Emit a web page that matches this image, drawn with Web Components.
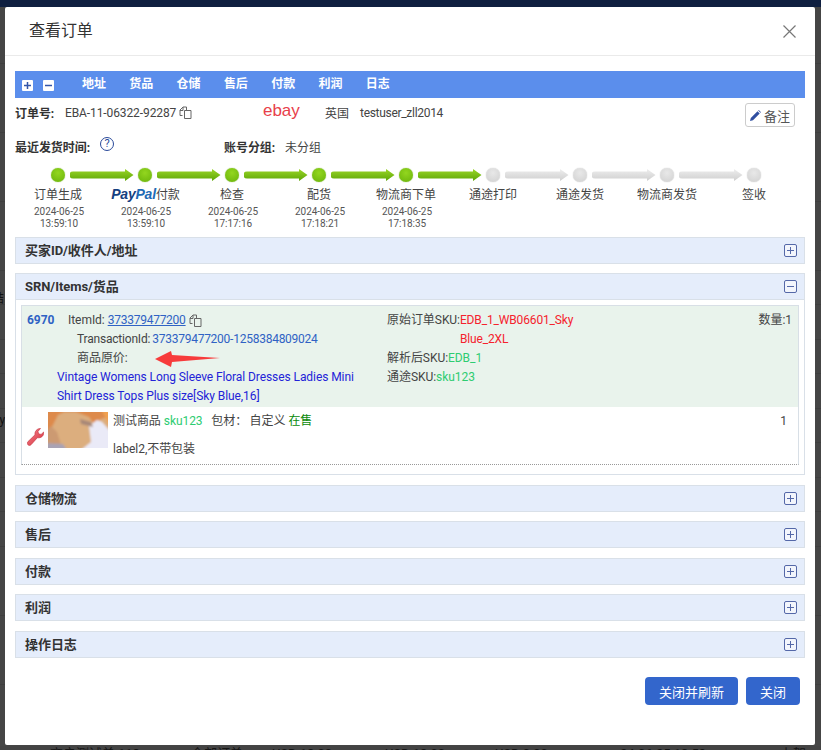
<!DOCTYPE html>
<html>
<head>
<meta charset="utf-8">
<style>
html, body { margin: 0; padding: 0; height: 750px; overflow: hidden; background: #434343; }
body { font: 12px Roboto, "Noto Sans CJK SC", sans-serif; color: #444; position: relative; letter-spacing: -.05px; }
</style>
</head>
<body>
<page-backdrop></page-backdrop>
<order-modal heading="查看订单">
	<order-toolbar></order-toolbar>
	<order-summary></order-summary>
	<order-steps></order-steps>
	<order-section heading="买家ID/收件人/地址"></order-section>
	<order-section heading="SRN/Items/货品" open>
		<order-item></order-item>
	</order-section>
	<order-section heading="仓储物流"></order-section>
	<order-section heading="售后"></order-section>
	<order-section heading="付款"></order-section>
	<order-section heading="利润"></order-section>
	<order-section heading="操作日志"></order-section>
</order-modal>

<script>
(function() {
	const copyIcon = `<svg width="13" height="13" viewBox="0 0 13 13" fill="none" stroke="#666" stroke-width="1"><path d="M5.500 4.500h6.500v8H5.500z"/><path d="M3.500 9.500H1V4l3-3h3.500v3.500"/><path d="M1 4.500h3V1"/></svg>`;

	class PageBackdrop extends HTMLElement {
		constructor() {
			super();
			const root = this.attachShadow({mode: "open"});
			root.innerHTML = `
				<style>
				:host { display: block; height: 750px; }
				.top { height: 7px; background: #0f1f40; }
				.rows { height: 739px; background: repeating-linear-gradient(#454545 0 33.500px, #3e3e3e 33.500px 34.500px) 0 -12px; color: #111; }
				.left { padding-top: 282px; }
				.left div { height: 124px; white-space: nowrap; }
				.cells { display: flex; color: #151515; font-size: 13px; line-height: 16px; padding-left: 50px; }
				.cells span { white-space: nowrap; flex: none; }
				</style>
				<div class="top"></div>
				<div class="rows"><div class="left"><div style="margin-left:-8px">结</div><div style="margin-left:-11px">ary</div></div></div>
				<div class="cells">
					<span style="width:141px">商户测试单 118</span><span style="width:81px">全部订单</span><span style="width:113px">USD 18.00</span><span style="width:110px">USD 18.00</span><span style="width:125px">USD 0.00</span><span style="width:160px">24-06-25 13:59</span><span>上架</span>
				</div>`;
		}
	}

	class OrderModal extends HTMLElement {
		constructor() {
			super();
			const root = this.attachShadow({mode: "open"});
			root.innerHTML = `
				<style>
				:host { display: flex; flex-direction: column; position: absolute; left: 5px; top: 7px; width: 810px; height: 738px; background: #fff; border-radius: 2px; box-sizing: border-box; }
				header { height: 48px; flex: none; border-bottom: 1px solid #eaeaea; display: flex; align-items: center; justify-content: space-between; padding: 0 19px 0 24px; }
				h1 { margin: 0; font-size: 16px; font-weight: 400; color: #333; line-height: 48px; }
				main { padding: 15px 10px 0; }
				footer { margin-top: auto; padding: 0 15px 40px; display: flex; justify-content: flex-end; gap: 8px; }
				button { height: 28px; border: 0; border-radius: 4px; background: #3366cc; color: #fff; font: inherit; font-size: 13px; padding: 0 14px; }
				</style>
				<header>
					<h1></h1>
					<svg width="13" height="13" viewBox="0 0 13 13" stroke="#777" stroke-width="1.200"><path d="M.5.500l12 12M12.500.500l-12 12"/></svg>
				</header>
				<main><slot></slot></main>
				<footer><button>关闭并刷新</button><button>关闭</button></footer>`;
			root.querySelector("h1").textContent = this.getAttribute("heading");
		}
	}

	class OrderToolbar extends HTMLElement {
		constructor() {
			super();
			const root = this.attachShadow({mode: "open"});
			const links = ["地址", "货品", "仓储", "售后", "付款", "利润", "日志"];
			root.innerHTML = `
				<style>
				:host { display: flex; align-items: center; height: 27px; background: #5b8eec; padding-left: 7px; color: #fff; font-weight: 700; }
				.box { width: 11px; height: 11px; background: #fff; border-radius: 1px; margin-right: 10px; flex: none; margin-top: 1px; }
				.box svg { display: block; }
				nav { display: flex; gap: 23.400px; margin-left: 18px; margin-top: -5px; }
				</style>
				<span class="box"><svg width="11" height="11" stroke="#3456a8" stroke-width="1.500"><path d="M2 5.500h7M5.500 2v7"/></svg></span>
				<span class="box"><svg width="11" height="11" stroke="#3456a8" stroke-width="1.500"><path d="M2 5.500h7"/></svg></span>
				<nav>${links.map(l => `<span>${l}</span>`).join("")}</nav>`;
		}
	}

	class OrderSummary extends HTMLElement {
		constructor() {
			super();
			const root = this.attachShadow({mode: "open"});
			root.innerHTML = `
				<style>
				:host { display: block; height: 69px; color: #444; }
				.row { display: grid; align-items: center; box-sizing: border-box; }
				.one { grid-template-columns: 50px 198px 62px 35px 1fr auto; height: 29px; padding-right: 10px; }
				.two { grid-template-columns: 85px 124px 61px 1fr; height: 34px; padding-top: 4px; }
				b { color: #333; font-weight: 700; }
				.id { display: flex; align-items: center; gap: 3px; white-space: nowrap; letter-spacing: -.1px; }
				.id svg { flex: none; }
				.user { letter-spacing: -.3px; }
				.ebay { font: 17px "Liberation Sans", sans-serif; color: #e8404a; margin-top: -3px; }
				.note { display: flex; align-items: center; gap: 3px; height: 22px; width: 48px; border: 1px solid #ccc; border-radius: 3px; justify-content: center; color: #555; font-size: 13px; margin-top: 5px; }
				.help { width: 14px; height: 14px; border: 1px solid #2a4a9a; border-radius: 50%; box-sizing: border-box; color: #2a4a9a; font-size: 11px; line-height: 12px; text-align: center; margin-top: -4px; }
				</style>
				<div class="row one">
					<b>订单号:</b>
					<span class="id">EBA-11-06322-92287 ${copyIcon}</span>
					<span class="ebay">ebay</span>
					<span>英国</span>
					<span class="user">testuser_zll2014</span>
					<span class="note"><svg width="11" height="11" viewBox="0 0 11 11" fill="#2f4ea0"><path d="M0 11l.8-3L7.500 1.300l2.200 2.200L3 10.200zM8.200.600l.6-.6 2.200 2.200-.6.6z"/></svg>备注</span>
				</div>
				<div class="row two">
					<b>最近发货时间:</b>
					<span class="help">?</span>
					<b>账号分组:</b>
					<span>未分组</span>
				</div>`;
		}
	}

	class OrderSteps extends HTMLElement {
		constructor() {
			super();
			const root = this.attachShadow({mode: "open"});
			const steps = [
				["订单生成", "2024-06-25", "13:59:10"],
				["付款", "2024-06-25", "13:59:10", true],
				["检查", "2024-06-25", "17:17:16"],
				["配货", "2024-06-25", "17:18:21"],
				["物流商下单", "2024-06-25", "17:18:35"],
				["通途打印"],
				["通途发货"],
				["物流商发货"],
				["签收"]
			];
			const arrow = (on) => `<svg class="arrow" width="64" height="12" viewBox="0 0 64 12"><defs><linearGradient id="g${on ? 1 : 0}" x1="0" y1="0" x2="0" y2="1"><stop offset="0" stop-color="${on ? "#9ad628" : "#eee"}"/><stop offset="1" stop-color="${on ? "#5ea606" : "#cfcfcf"}"/></linearGradient></defs><path d="M3 2.500H55V0l8.500 6L55 12V9.500H3a3.500 3.500 0 0 1 0-7z" fill="url(#g${on ? 1 : 0})"/></svg>`;
			let track = "";
			let labels = "";
			steps.forEach((s, i) => {
				const on = !!s[1];
				track += `<i class="dot ${on ? "on" : ""}"></i>`;
				if (i < steps.length - 1) track += arrow(on);
				labels += `<div class="step"><div class="name">${s[3] ? `<span class="pp"><em>Pay</em><em>Pal</em></span>` : ""}${s[0]}</div>${on ? `<div class="time">${s[1]}<br>${s[2]}</div>` : ""}</div>`;
			});
			root.innerHTML = `
				<style>
				:host { display: block; height: 69.500px; }
				.track { display: flex; align-items: center; padding-left: 36px; height: 15px; }
				.dot { flex: none; width: 14px; height: 14px; border-radius: 50%; background: radial-gradient(circle at 50% 35%, #e8e8e8, #d0d0d0); box-shadow: 0 0 1px #aaa; }
				.dot.on { background: radial-gradient(circle at 50% 35%, #93d61f, #69b30a); box-shadow: 0 0 1px #5e9c10; }
				.arrow { flex: none; margin: 1px 4px 0 5px; width: 64px; }
				.labels { display: grid; grid-template-columns: repeat(9, 87px); margin-left: -.500px; }
				.step { text-align: center; }
				.name { line-height: 20px; margin-top: 3px; white-space: nowrap; }
				.time { font-size: 10px; line-height: 11.500px; color: #555; margin-top: 1px; padding-left: 2px; }
				.pp { font: italic 700 14px "Liberation Sans", sans-serif; letter-spacing: -.200px; margin-left: 1px; }
				.pp em:first-child { color: #15407f; }
				.pp em:last-child { color: #1f6bb5; }
				</style>
				<div class="track">${track}</div>
				<div class="labels">${labels}</div>`;
		}
	}

	class OrderSection extends HTMLElement {
		constructor() {
			super();
			const root = this.attachShadow({mode: "open"});
			const open = this.hasAttribute("open");
			root.innerHTML = `
				<style>
				:host { display: block; margin-bottom: 9.500px; border: 1px solid #d9e0e8; box-sizing: border-box; }
				.head { display: flex; align-items: center; justify-content: space-between; height: 25px; background: #e5edfb; padding: 0 7px 0 9px; font-size: 13px; font-weight: 700; color: #333; }
				.head span { margin-top: -2px; }
				.body { display: ${open ? "block" : "none"}; padding: 5px 5px 9px; border-top: 1px solid #d9e0e8; }
				svg { display: block; }
				</style>
				<div class="head"><span></span>
					<svg width="13" height="13" viewBox="0 0 13 13" fill="#f2f5fc" stroke="#5468a8"><rect x=".5" y=".5" width="12" height="12" rx="1.500"/><path d="M3 6.500h7${open ? "" : "M6.500 3v7"}"/></svg>
				</div>
				<div class="body"><slot></slot></div>`;
			root.querySelector(".head span").textContent = this.getAttribute("heading");
		}
	}

	class OrderItem extends HTMLElement {
		constructor() {
			super();
			const root = this.attachShadow({mode: "open"});
			root.innerHTML = `
				<style>
				:host { display: block; border: 1px solid #d8dfe6; border-bottom: 1px dotted #999; line-height: 19px; color: #444; }
				.top { display: grid; grid-template-columns: 365px 1fr auto; background: #e9f3ec; height: 101px; padding: 5px 6px 0 0; box-sizing: border-box; }
				.left { position: relative; }
				.line { display: flex; align-items: center; white-space: nowrap; }
				.no { color: #2f62c4; font-weight: 700; width: 41px; margin-left: 5px; flex: none; }
				.ind { padding-left: 55px; }
				a, .tid { color: #2f62c4; letter-spacing: -.25px; }
				.label { letter-spacing: -.2px; }
				.title { color: #2323d8; margin-left: 35px; width: 300px; letter-spacing: -.08px; }
				.arrow { position: absolute; left: 133px; top: 40px; }
				.right { width: 190px; }
				.red { color: #f5222d; letter-spacing: -.15px; }
				.green { color: #2ecc71; }
				.sku { display: flex; }
				.low { display: flex; height: 57px; padding: 5px 11px 0 0; box-sizing: border-box; background: #fff; }
				.wrench { margin: 16px 4px 0 5px; flex: none; }
				.thumb { flex: none; margin-right: 5px; display: block; }
				.desc { flex: 1; }
				.desc div { height: 28px; line-height: 19px; white-space: pre; }
				.ok { color: #0a8a0a; }
				.tight { letter-spacing: -.6px; }
				</style>
				<div class="top">
					<div class="left">
						<div class="line"><span class="no">6970</span><span style="margin-right:3px">ItemId:</span><a href="#">373379477200</a>&nbsp;${copyIcon}</div>
						<div class="line ind"><span class="label">TransactionId:</span><span class="tid" style="margin-left:2px">373379477200-1258384809024</span></div>
						<div class="line ind">商品原价:</div>
						<div class="title">Vintage Womens Long Sleeve Floral Dresses Ladies Mini Shirt Dress Tops Plus size[Sky Blue,16]</div>
						<svg class="arrow" width="66" height="16" viewBox="0 0 66 16"><path d="M0 8L16 0l1 4 48 3-48 4-1 5z" fill="#f73b3b"/></svg>
					</div>
					<div class="right">
						<div class="sku"><span style="white-space:nowrap">原始订单SKU:</span><span class="red">EDB_1_WB06601_Sky Blue_2XL</span></div>
						<div>解析后SKU:<span class="green">EDB_1</span></div>
						<div>通途SKU:<span class="green">sku123</span></div>
					</div>
					<div>数量:1</div>
				</div>
				<div class="low">
					<svg class="wrench" width="17" height="18" viewBox="0 0 17 18"><defs><linearGradient id="w" x1="0" y1="0" x2="1" y2="1"><stop offset="0" stop-color="#f58a92"/><stop offset="1" stop-color="#d62a38"/></linearGradient></defs><path d="M.8 13.800L8 6.800C7.500 3.500 9.800.5 13.500.5L11 3.400l.6 2.400 2.500.6L16.700 4c.5 3.700-2.700 6.500-6.300 5.700L4 16.800c-2 2-5-1-3.200-3z" fill="url(#w)" stroke="#c2303c" stroke-width=".6"/></svg>
					<svg class="thumb" width="60" height="36" viewBox="0 0 60 36">
						<defs><filter id="soft"><feGaussianBlur stdDeviation="1"/></filter><clipPath id="c"><rect width="60" height="36"/></clipPath></defs>
						<g clip-path="url(#c)"><g filter="url(#soft)">
							<rect x="-3" y="-3" width="66" height="42" fill="#dcae7e"/>
							<path d="M-3-3h66v7l-10 3-7 5-5-7-13-5-12 0-6 3-6 12-4 3-3 6z" fill="#dd8a4c"/>
							<path d="M-3 21l6-7 6 6 5 16H-3z" fill="#cc9a72"/>
							<path d="M-3 31l18 1 4 6H-3z" fill="#a9a3b4"/>
							<path d="M41 14l8-6 5 2 9 10v18H33l10-8z" fill="#eaeaf7"/>
							<path d="M32 7l11 3 2 5-12-3z" fill="#a88878"/>
							<path d="M53-3h10v20z" fill="#f0a050"/>
						</g></g>
					</svg>
					<div class="desc">
						<div>测试商品 <span class="green">sku123</span>   包材：<span class="tight"> </span>自定义 <span class="ok">在售</span></div>
						<div>label2,不带包装</div>
					</div>
					<span>1</span>
				</div>`;
		}
	}

	customElements.define("page-backdrop", PageBackdrop);
	customElements.define("order-modal", OrderModal);
	customElements.define("order-toolbar", OrderToolbar);
	customElements.define("order-summary", OrderSummary);
	customElements.define("order-steps", OrderSteps);
	customElements.define("order-section", OrderSection);
	customElements.define("order-item", OrderItem);
})();
</script>
</body>
</html>
